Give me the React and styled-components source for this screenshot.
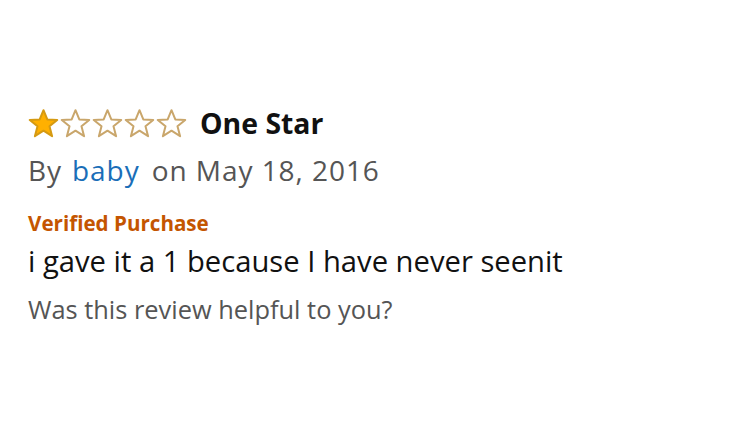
import React from "react";
import styled, { createGlobalStyle } from "styled-components";

const Global = createGlobalStyle`
  html, body { margin: 0; padding: 0; background: #fff; }
  body { font-family: "Open Sans", "Noto Sans", sans-serif; }
`;

const Page = styled.div`
  width: 750px;
  height: 438px;
  box-sizing: border-box;
  padding: 106px 0 0 28px;
  display: flex;
  flex-direction: column;
`;

const TitleRow = styled.div`
  display: flex;
  align-items: center;
  gap: 13px;
  height: 34px;
`;

const Stars = styled.div`
  display: flex;
  gap: 1px;
`;

const Title = styled.span`
  font-size: 28.4px;
  font-weight: 700;
  color: #111;
  line-height: 34px;
`;

const Byline = styled.div`
  margin-top: 12px;
  font-size: 28px;
  letter-spacing: 0.95px;
  color: #555;
  line-height: 36px;
  display: flex;
  gap: 10px;
`;

const Author = styled.span`
  color: #1a6eb8;
  margin-right: 2px;
`;

const Verified = styled.div`
  margin-top: 22px;
  font-size: 20.6px;
  font-weight: 700;
  color: #c45500;
  line-height: 26px;
`;

const Body = styled.div`
  margin-top: 7px;
  font-size: 29.2px;
  color: #111;
  line-height: 36px;
`;

const Helpful = styled.div`
  margin-top: 14px;
  font-size: 25.4px;
  color: #555;
  line-height: 32px;
`;

const StarIcon = ({ filled }) => (
  <svg width="31" height="29" viewBox="0 0 31 29">
    <polygon
      points="15.5,1.2 19.3,10.4 29.2,10.9 21.5,17.2 24.1,27.2 15.5,21.7 6.9,27.2 9.5,17.2 1.8,10.9 11.7,10.4"
      fill={filled ? "#ffb000" : "#fff"}
      stroke={filled ? "#d59a12" : "#c9a66b"}
      strokeWidth="2"
      strokeLinejoin="round"
    />
  </svg>
);

export default function App() {
  return (
    <>
      <Global />
      <Page>
        <TitleRow>
          <Stars>
            {[0, 1, 2, 3, 4].map((i) => (
              <StarIcon key={i} filled={i === 0} />
            ))}
          </Stars>
          <Title>One Star</Title>
        </TitleRow>
        <Byline>
          <span>By</span>
          <Author>baby</Author>
          <span>on May 18, 2016</span>
        </Byline>
        <Verified>Verified Purchase</Verified>
        <Body>i gave it a 1 because I have never seenit</Body>
        <Helpful>Was this review helpful to you?</Helpful>
      </Page>
    </>
  );
}
